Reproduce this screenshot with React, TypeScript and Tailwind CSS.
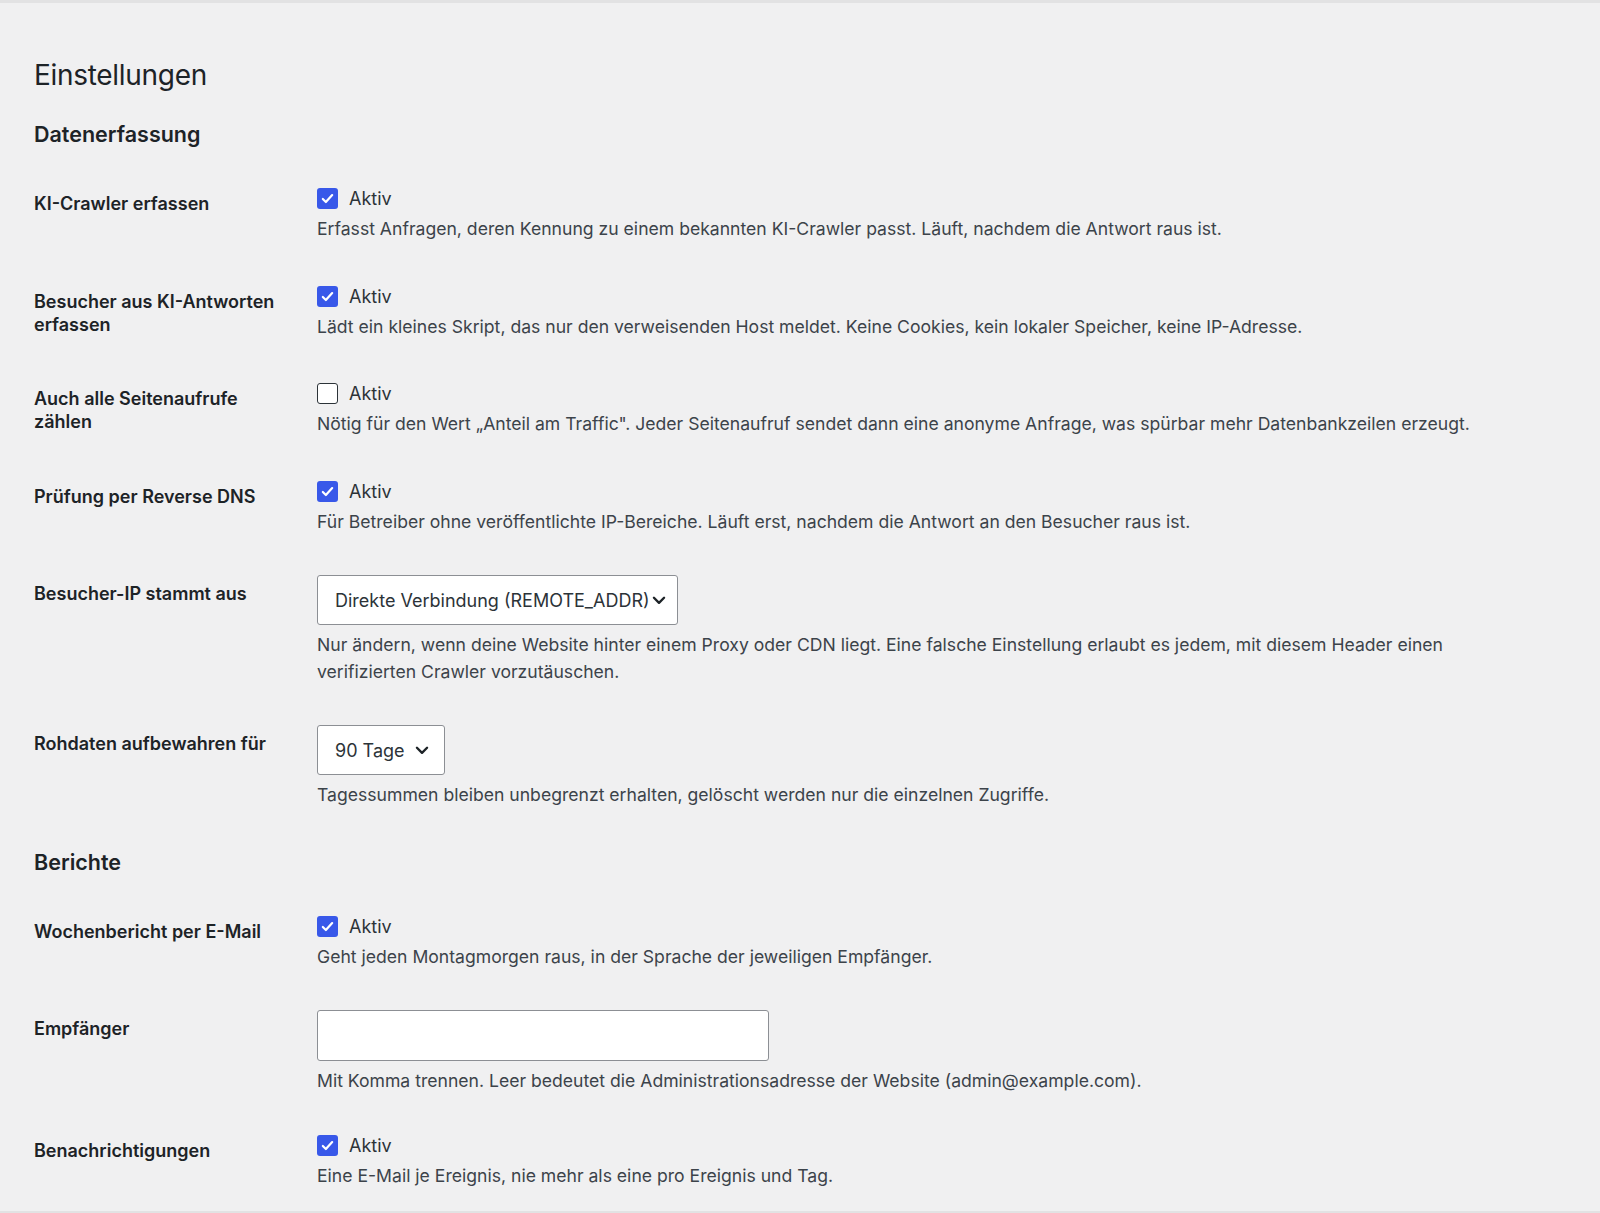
import { ReactNode } from "react";

const font = { fontFamily: "Inter, 'Noto Sans', sans-serif" };

function Checkbox({ checked }: { checked: boolean }) {
  if (!checked) {
    return (
      <span className="inline-block h-[21px] w-[21px] rounded-[3px] border-[1.5px] border-[#2c3338] bg-white" />
    );
  }
  return (
    <span className="inline-flex h-[21px] w-[21px] items-center justify-center rounded-[3px] bg-[#3858e9]">
      <svg viewBox="0 0 20 20" className="h-[17px] w-[17px]" fill="none">
        <path
          d="M4.5 10.5l3.6 3.6L15.5 6"
          stroke="white"
          strokeWidth="2.6"
          strokeLinecap="round"
          strokeLinejoin="round"
        />
      </svg>
    </span>
  );
}

function Chevron() {
  return (
    <svg viewBox="0 0 16 16" className="h-[18px] w-[18px] shrink-0" fill="none">
      <path
        d="M3.5 6l4.5 4.5L12.5 6"
        stroke="#1d2327"
        strokeWidth="2.1"
        strokeLinecap="round"
        strokeLinejoin="round"
      />
    </svg>
  );
}

function Select({ value, width }: { value: string; width: string }) {
  return (
    <div
      className={`flex h-[50px] items-center justify-between whitespace-nowrap rounded-[3px] border border-[#8c8f94] bg-white pl-[17px] pr-[13px] text-[18px] text-[#2c3338] ${width}`}
    >
      <span>{value}</span>
      <Chevron />
    </div>
  );
}

function Desc({ children, gap = "mt-[4px]" }: { children: ReactNode; gap?: string }) {
  return (
    <p className={`${gap} text-[17.6px] leading-[26.5px] text-[#3c434a]`}>{children}</p>
  );
}

function Row({
  label,
  children,
  bottom = "pb-[20px]",
}: {
  label: string;
  children: ReactNode;
  bottom?: string;
}) {
  return (
    <div className="flex">
      <div className="w-[283px] shrink-0 pr-[34px] pt-[27px] text-[18px] font-semibold leading-[23px] text-[#1d2327]">
        {label}
      </div>
      <div className={`w-[1190px] pt-[20px] ${bottom}`}>{children}</div>
    </div>
  );
}

function Toggle({ checked, desc }: { checked: boolean; desc: string }) {
  return (
    <>
      <label className="flex h-[27px] items-center gap-[11px] text-[18px] text-[#2c3338]">
        <Checkbox checked={checked} />
        Aktiv
      </label>
      <Desc>{desc}</Desc>
    </>
  );
}

export default function App() {
  return (
    <div
      className="min-h-[1213px] border-t-[3px] border-b-[2px] border-[#e2e2e3] bg-[#f0f0f1] pl-[34px] pt-[52px] text-[#1d2327]"
      style={font}
    >
      <h1 className="text-[28px] font-normal leading-[40px] tracking-[-0.3px]">Einstellungen</h1>

      <h2 className="mt-[24px] mb-[16px] text-[21.5px] font-semibold leading-[30px]">
        Datenerfassung
      </h2>

      <Row label="KI-Crawler erfassen">
        <Toggle
          checked
          desc="Erfasst Anfragen, deren Kennung zu einem bekannten KI-Crawler passt. Läuft, nachdem die Antwort raus ist."
        />
      </Row>
      <Row label="Besucher aus KI-Antworten erfassen">
        <Toggle
          checked
          desc="Lädt ein kleines Skript, das nur den verweisenden Host meldet. Keine Cookies, kein lokaler Speicher, keine IP-Adresse."
        />
      </Row>
      <Row label="Auch alle Seitenaufrufe zählen">
        <Toggle
          checked={false}
          desc={'Nötig für den Wert „Anteil am Traffic". Jeder Seitenaufruf sendet dann eine anonyme Anfrage, was spürbar mehr Datenbankzeilen erzeugt.'}
        />
      </Row>
      <Row label="Prüfung per Reverse DNS">
        <Toggle
          checked
          desc="Für Betreiber ohne veröffentlichte IP-Bereiche. Läuft erst, nachdem die Antwort an den Besucher raus ist."
        />
      </Row>
      <Row label="Besucher-IP stammt aus">
        <Select value="Direkte Verbindung (REMOTE_ADDR)" width="w-[361px]" />
        <Desc gap="mt-[7px]">
          Nur ändern, wenn deine Website hinter einem Proxy oder CDN liegt. Eine falsche Einstellung
          erlaubt es jedem, mit diesem Header einen verifizierten Crawler vorzutäuschen.
        </Desc>
      </Row>
      <Row label="Rohdaten aufbewahren für">
        <Select value="90 Tage" width="w-[128px]" />
        <Desc gap="mt-[7px]">
          Tagessummen bleiben unbegrenzt erhalten, gelöscht werden nur die einzelnen Zugriffe.
        </Desc>
      </Row>

      <h2 className="mt-[18px] mb-[16px] text-[21.5px] font-semibold leading-[30px]">Berichte</h2>

      <Row label="Wochenbericht per E-Mail">
        <Toggle
          checked
          desc="Geht jeden Montagmorgen raus, in der Sprache der jeweiligen Empfänger."
        />
      </Row>
      <Row label="Empfänger" bottom="pb-[17px]">
        <input
          type="text"
          className="block h-[51px] w-[452px] rounded-[3px] border border-[#8c8f94] bg-white px-3 text-[18px] outline-none"
        />
        <Desc gap="mt-[7px]">
          Mit Komma trennen. Leer bedeutet die Administrationsadresse der Website (admin@example.com).
        </Desc>
      </Row>
      <Row label="Benachrichtigungen">
        <Toggle
          checked
          desc="Eine E-Mail je Ereignis, nie mehr als eine pro Ereignis und Tag."
        />
      </Row>
    </div>
  );
}
